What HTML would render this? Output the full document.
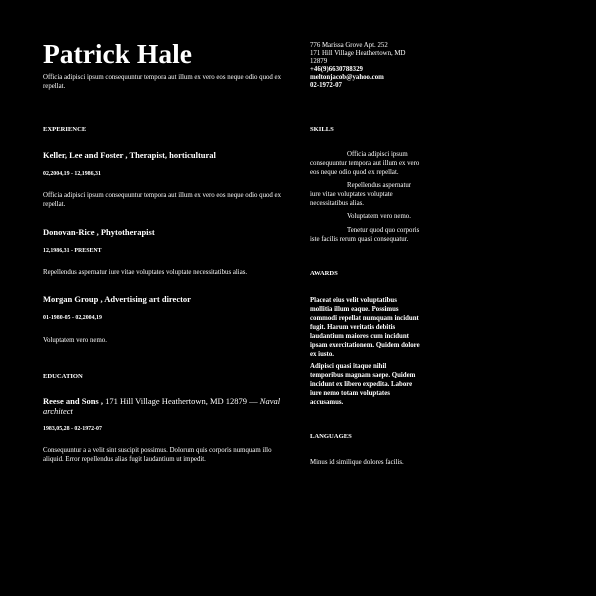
<!DOCTYPE html>
<html><head><meta charset="utf-8"><style>
body{margin:0;background:#000;width:596px;height:596px;overflow:hidden;position:relative;font-family:"Liberation Serif",serif;color:#fff}
div{position:absolute;white-space:nowrap}
.n{font-size:27.5px;font-weight:bold;line-height:30px}
.p{font-size:6.85px;line-height:9px}
.h{font-size:6.6px;font-weight:bold;line-height:9px}
.t{font-size:8.5px;font-weight:bold;line-height:11px}
.d{font-size:5.9px;font-weight:bold;line-height:9px}
.w{white-space:normal}
.b{font-weight:bold}
</style></head><body>
<div class="n" style="left:43px;top:39px">Patrick Hale</div>
<div class="p w" style="left:43px;top:73px;width:248px">Officia adipisci ipsum consequuntur tempora aut illum ex vero eos neque odio quod ex repellat.</div>

<div class="h" style="left:43px;top:125px">EXPERIENCE</div>
<div class="t" style="left:43px;top:150px">Keller, Lee and Foster , Therapist, horticultural</div>
<div class="d" style="left:43px;top:170px">02,2004,19 - 12,1986,31</div>
<div class="p w" style="left:43px;top:191px;width:248px">Officia adipisci ipsum consequuntur tempora aut illum ex vero eos neque odio quod ex repellat.</div>
<div class="t" style="left:43px;top:227px">Donovan-Rice , Phytotherapist</div>
<div class="d" style="left:43px;top:247px">12,1986,31 - PRESENT</div>
<div class="p" style="left:43px;top:268px">Repellendus aspernatur iure vitae voluptates voluptate necessitatibus alias.</div>
<div class="t" style="left:43px;top:294px">Morgan Group , Advertising art director</div>
<div class="d" style="left:43px;top:314px">01-1980-05 - 02,2004,19</div>
<div class="p" style="left:43px;top:336px">Voluptatem vero nemo.</div>

<div class="h" style="left:43px;top:372px">EDUCATION</div>
<div class="t w" style="left:43px;top:397px;width:250px;line-height:9.5px">Reese and Sons , <span style="font-weight:normal">171 Hill Village Heathertown, MD 12879 — <i>Naval architect</i></span></div>
<div class="d" style="left:43px;top:425px">1983,05,28 - 02-1972-07</div>
<div class="p w" style="left:43px;top:446px;width:250px">Consequuntur a a velit sint suscipit possimus. Dolorum quis corporis numquam illo aliquid. Error repellendus alias fugit laudantium ut impedit.</div>

<div class="p" style="left:310px;top:41.5px;line-height:8px">776 Marissa Grove Apt. 252<br>171 Hill Village Heathertown, MD<br>12879<br><b>+46(9)6630788329</b><br><b>meltonjacob@yahoo.com</b><br><b>02-1972-07</b></div>

<div class="h" style="left:310px;top:125px">SKILLS</div>
<div class="p w" style="left:310px;top:149.5px;width:112px;text-indent:37px">Officia adipisci ipsum consequuntur tempora aut illum ex vero eos neque odio quod ex repellat.</div>
<div class="p w" style="left:310px;top:180.5px;width:112px;text-indent:37px">Repellendus aspernatur iure vitae voluptates voluptate necessitatibus alias.</div>
<div class="p w" style="left:310px;top:211.5px;width:112px;text-indent:37px">Voluptatem vero nemo.</div>
<div class="p w" style="left:310px;top:225.5px;width:112px;text-indent:37px">Tenetur quod quo corporis iste facilis rerum quasi consequatur.</div>

<div class="h" style="left:310px;top:269px">AWARDS</div>
<div class="p w b" style="left:310px;top:295.5px;width:111px">Placeat eius velit voluptatibus mollitia illum eaque. Possimus commodi repellat numquam incidunt fugit. Harum veritatis debitis laudantium maiores cum incidunt ipsam exercitationem. Quidem dolore ex iusto.</div>
<div class="p w b" style="left:310px;top:361.5px;width:111px">Adipisci quasi itaque nihil temporibus magnam saepe. Quidem incidunt ex libero expedita. Labore iure nemo totam voluptates accusamus.</div>

<div class="h" style="left:310px;top:432px">LANGUAGES</div>
<div class="p" style="left:310px;top:457.5px">Minus id similique dolores facilis.</div>
</body></html>
